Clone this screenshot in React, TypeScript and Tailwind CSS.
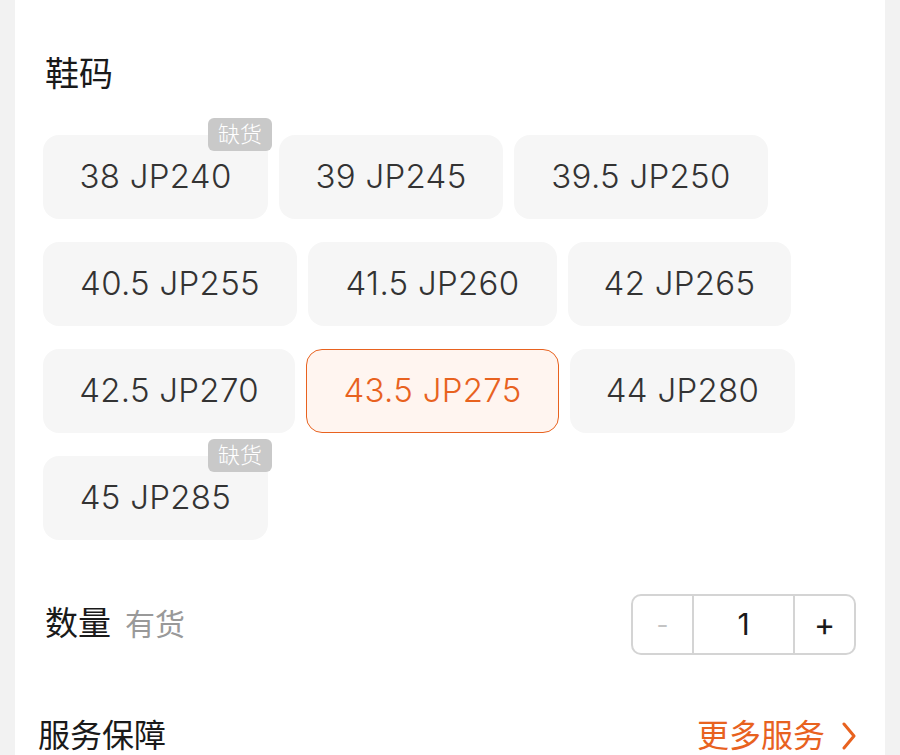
import React from "react";

const sizes = [
  { label: "38 JP240", w: "w-[225px]", soldOut: true },
  { label: "39 JP245", w: "w-[224px]" },
  { label: "39.5 JP250", w: "w-[254px]" },
  { label: "40.5 JP255", w: "w-[254px]" },
  { label: "41.5 JP260", w: "w-[249px]" },
  { label: "42 JP265", w: "w-[223px]" },
  { label: "42.5 JP270", w: "w-[252px]" },
  { label: "43.5 JP275", w: "w-[253px]", selected: true },
  { label: "44 JP280", w: "w-[225px]" },
  { label: "45 JP285", w: "w-[225px]", soldOut: true },
];

export default function App() {
  return (
    <div className="min-h-[755px] w-[900px] bg-[#f2f2f2] px-[15px] font-['Inter','Noto_Sans_CJK_SC',sans-serif]">
      <div className="h-[755px] overflow-hidden bg-white px-[28px] pt-[54px]">
        <div className="pl-[2px] text-[34px] leading-[40px] text-[#1a1a1a]">鞋码</div>

        <div className="mt-[41px] flex flex-wrap gap-x-[11px] gap-y-[23px]">
          {sizes.map((s) => (
            <div
              key={s.label}
              className={
                (s.selected
                  ? "border border-[#e8621f] bg-[#fff5f0] text-[#e8621f] "
                  : "bg-[#f6f6f6] text-[#333333] ") +
                s.w +
                " relative flex h-[84px] items-center justify-center rounded-[16px] text-[33px] font-light tracking-[0.3px]"
              }
            >
              {s.label}
              {s.soldOut && (
                <span className="absolute right-[-4px] top-[-17px] rounded-[6px] bg-[#c9c9c9] px-[10px] text-[22px] leading-[33px] tracking-normal text-white">
                  缺货
                </span>
              )}
            </div>
          ))}
        </div>

        <div className="mt-[54px] flex items-center justify-between">
          <div className="flex items-baseline gap-[14px] pl-[2px]">
            <span className="text-[33px] leading-[40px] text-[#1a1a1a]">数量</span>
            <span className="text-[30px] text-[#999999]">有货</span>
          </div>
          <div className="mr-[1px] flex h-[61px] overflow-hidden rounded-[10px] border-2 border-[#d4d4d4]">
            <div className="flex w-[59px] items-center justify-center text-[26px] text-[#c4c4c4]">-</div>
            <div className="flex w-[103px] items-center justify-center border-x-2 border-[#d4d4d4] text-[30px] text-[#1a1a1a]">1</div>
            <div className="flex w-[59px] items-center justify-center text-[32px] text-[#1a1a1a]">+</div>
          </div>
        </div>

        <div className="mt-[57px] flex items-center justify-between">
          <span className="-ml-[5px] text-[32px] leading-[40px] text-[#1a1a1a]">服务保障</span>
          <span className="flex items-center gap-[16px] text-[32px] text-[#e8621f]">
            更多服务
            <svg width="16" height="28" viewBox="0 0 16 28" fill="none" stroke="currentColor" strokeWidth="3" strokeLinecap="round" strokeLinejoin="round">
              <path d="M3 2l10 12L3 26" />
            </svg>
          </span>
        </div>
      </div>
    </div>
  );
}
